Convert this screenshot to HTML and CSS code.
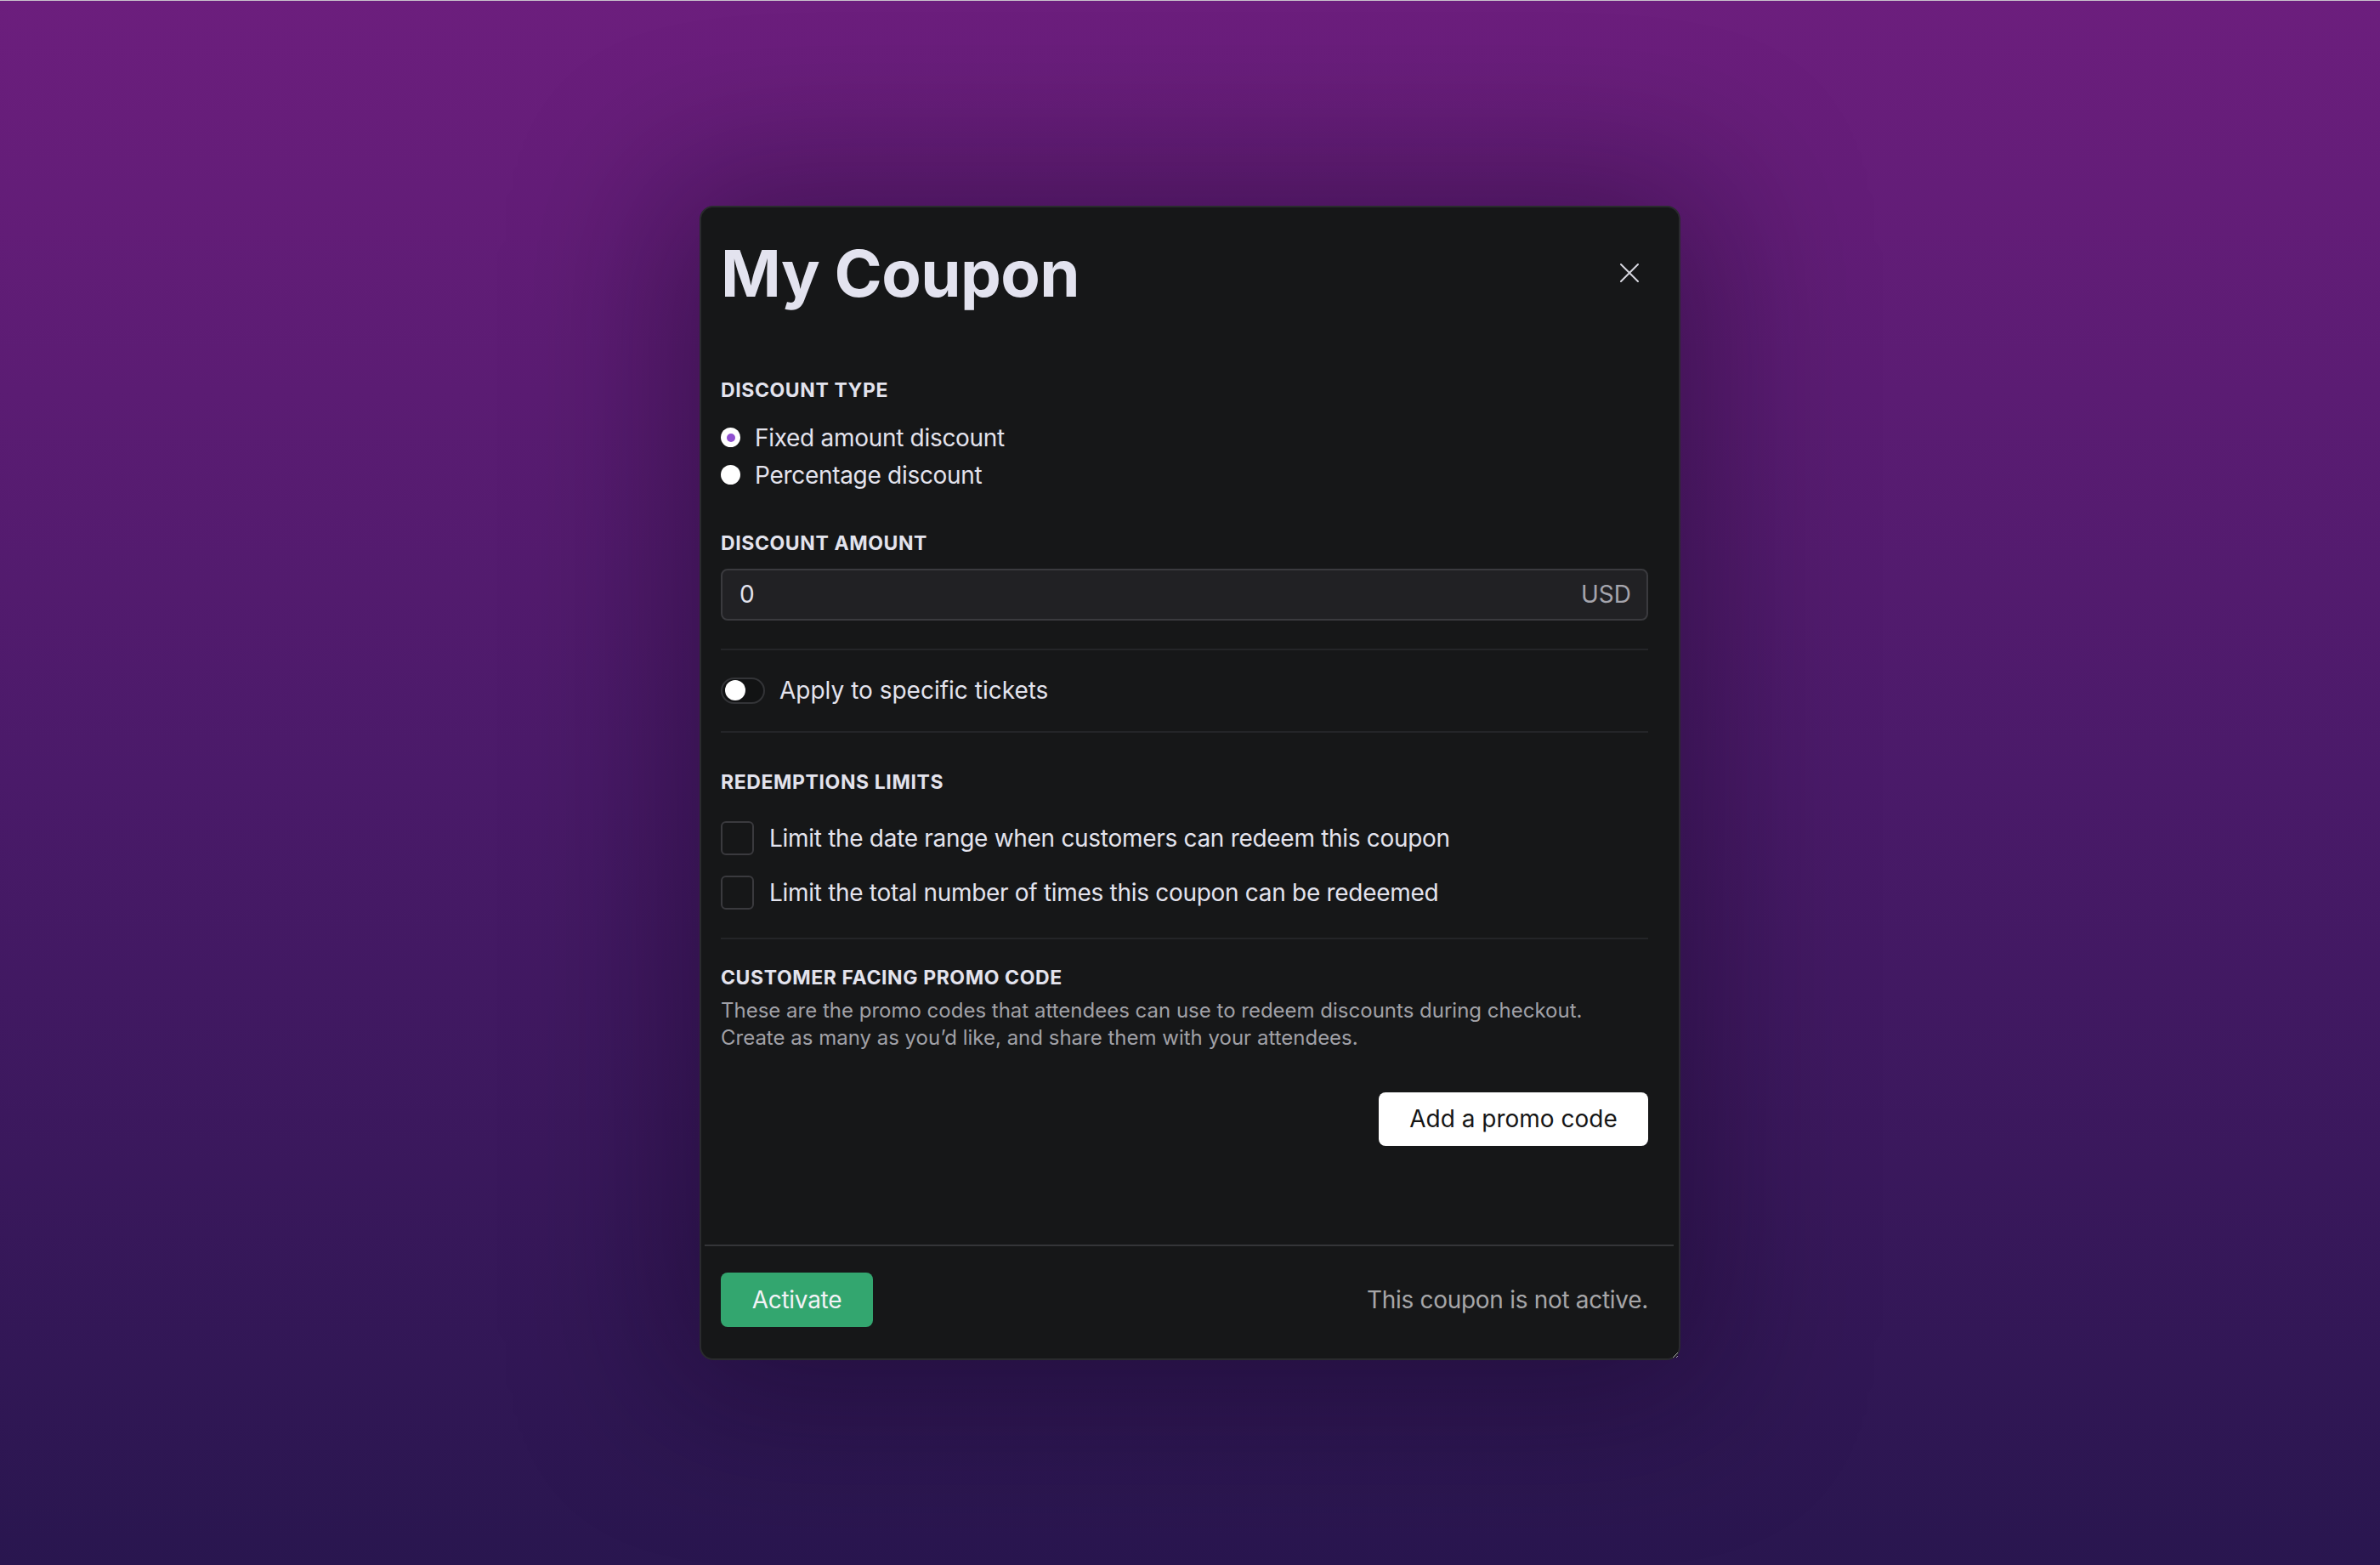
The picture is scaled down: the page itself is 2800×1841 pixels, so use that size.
FILE: index.html
```html
<!DOCTYPE html>
<html lang="en">
<head>
    <meta charset="UTF-8">
    <meta name="viewport" content="width=device-width, initial-scale=1.0">
    <title>My Coupon</title>
    <link rel="stylesheet" href="styles.css">
</head>
<body>
    <div class="backdrop">
        <div class="modal">
            <div class="modal-body">
                <div class="modal-header">
                    <h1>My Coupon</h1>
                    <button class="close-btn" aria-label="Close">
                        <svg width="22" height="22" viewBox="0 0 22 22">
                            <path d="M1 1 L21 21 M21 1 L1 21" stroke="#d6d6de" stroke-width="2" stroke-linecap="round"/>
                        </svg>
                    </button>
                </div>

                <div class="field-label first">DISCOUNT TYPE</div>
                <div class="radio-list">
                    <label class="radio-row"><span class="radio checked"></span>Fixed amount discount</label>
                    <label class="radio-row"><span class="radio"></span>Percentage discount</label>
                </div>

                <div class="field-label amount">DISCOUNT AMOUNT</div>
                <div class="amount-input">
                    <span class="value">0</span>
                    <span class="currency">USD</span>
                </div>

                <div class="toggle-row">
                    <span class="toggle"><span class="knob"></span></span>
                    Apply to specific tickets
                </div>

                <div class="field-label limits">REDEMPTIONS LIMITS</div>
                <div class="check-list">
                    <label class="check-row"><span class="checkbox"></span>Limit the date range when customers can redeem this coupon</label>
                    <label class="check-row"><span class="checkbox"></span>Limit the total number of times this coupon can be redeemed</label>
                </div>

                <div class="promo-section">
                    <div class="field-label">CUSTOMER FACING PROMO CODE</div>
                    <p class="promo-desc">These are the promo codes that attendees can use to redeem discounts during checkout.<br>Create as many as you’d like, and share them with your attendees.</p>
                    <div class="promo-actions">
                        <button class="btn-white">Add a promo code</button>
                    </div>
                </div>
            </div>

            <div class="modal-footer">
                <button class="btn-green">Activate</button>
                <span class="status">This coupon is not active.</span>
            </div>
        </div>
    </div>
</body>
</html>
```

FILE: styles.css
```css
body {
    margin: 0;
    font-family: "Inter", "Noto Sans", sans-serif;
    color: #e3e3ed;
    background: linear-gradient(to bottom, #6c1e7d 0%, #4a1a69 50%, #29164f 100%);
    border-top: 1px solid #c9c2cc;
}
.backdrop {
    height: 1840px;
    display: flex;
    align-items: center;
    justify-content: center;
}
.modal {
    width: 1154px;
    height: 1358px;
    box-sizing: border-box;
    margin-top: -1px;
    background-color: #161718;
    border: 2px solid #2a2b2e;
    border-radius: 16px;
    box-shadow: 0 10px 180px 40px rgba(10, 0, 20, 0.35);
    display: flex;
    flex-direction: column;
    overflow: hidden;
    resize: both;
}
.modal-body {
    flex: 1;
    padding: 31px 36px 0 23px;
}
.modal-header {
    display: flex;
    justify-content: space-between;
    align-items: center;
}
.modal-header h1 {
    margin: 0;
    font-size: 76px;
    line-height: 92px;
    font-weight: 700;
    letter-spacing: -0.6px;
    color: #e3e3ef;
}
.close-btn {
    width: 44px;
    height: 44px;
    padding: 0;
    border: none;
    background: none;
    display: flex;
    align-items: center;
    justify-content: center;
    cursor: pointer;
}
.field-label {
    font-size: 23px;
    line-height: 28px;
    font-weight: 700;
    letter-spacing: 0.6px;
}
.field-label.first {
    margin-top: 78px;
}
.field-label.amount {
    margin-top: 44px;
}
.field-label.limits {
    margin-top: 44px;
}
.radio-list {
    margin-top: 20px;
}
.radio-row, .check-row, .toggle-row {
    display: flex;
    align-items: center;
    font-size: 28px;
    letter-spacing: -0.3px;
}
.radio-row {
    line-height: 44px;
    gap: 17px;
}
.radio {
    width: 23px;
    height: 23px;
    border-radius: 50%;
    background-color: #fff;
    display: flex;
    align-items: center;
    justify-content: center;
}
.radio.checked::after {
    content: "";
    width: 10px;
    height: 10px;
    border-radius: 50%;
    background-color: #9050d0;
}
.amount-input {
    margin-top: 16px;
    height: 61px;
    box-sizing: border-box;
    border: 2px solid #3a3a3e;
    border-radius: 8px;
    background-color: #212124;
    padding: 0 18px 0 20px;
    display: flex;
    align-items: center;
    justify-content: space-between;
    font-size: 28px;
}
.amount-input .currency {
    color: #a5a5ad;
}
.toggle-row {
    margin-top: 33px;
    padding: 26px 0 26px;
    line-height: 43px;
    gap: 17px;
    letter-spacing: 0;
    border-top: 2px solid #242528;
    border-bottom: 2px solid #242528;
}
.toggle {
    width: 52px;
    height: 31px;
    box-sizing: border-box;
    border: 2px solid #333437;
    border-radius: 16px;
    background-color: #121314;
    padding: 0 3px;
    display: flex;
    align-items: center;
}
.knob {
    width: 24px;
    height: 24px;
    border-radius: 50%;
    background-color: #fff;
}
.check-list {
    margin-top: 32px;
    display: flex;
    flex-direction: column;
    gap: 24px;
}
.check-row {
    height: 40px;
    gap: 18px;
}
.checkbox {
    width: 39px;
    height: 40px;
    box-sizing: border-box;
    border: 2px solid #3a3a3e;
    border-radius: 6px;
}
.promo-section {
    margin-top: 33px;
    padding-top: 31px;
    border-top: 2px solid #242528;
}
.promo-desc {
    margin: 9px 0 0;
    font-size: 24px;
    line-height: 32px;
    color: #a1a1a7;
}
.promo-actions {
    margin-top: 48px;
    display: flex;
    justify-content: flex-end;
}
.btn-white {
    width: 317px;
    height: 63px;
    border: none;
    border-radius: 8px;
    background-color: #fff;
    color: #161616;
    font-family: inherit;
    font-size: 28px;
    cursor: pointer;
}
.modal-footer {
    margin: 0 6px 0 4px;
    padding: 31px 30px 37px 19px;
    border-top: 2px solid #343538;
    display: flex;
    justify-content: space-between;
    align-items: center;
}
.btn-green {
    width: 179px;
    height: 64px;
    border: none;
    border-radius: 8px;
    background-color: #33a66f;
    color: #f2f2f6;
    font-family: inherit;
    font-size: 28px;
    letter-spacing: -0.3px;
    cursor: pointer;
}
.status {
    font-size: 28px;
    letter-spacing: -0.3px;
    color: #a6a6a8;
}
```
